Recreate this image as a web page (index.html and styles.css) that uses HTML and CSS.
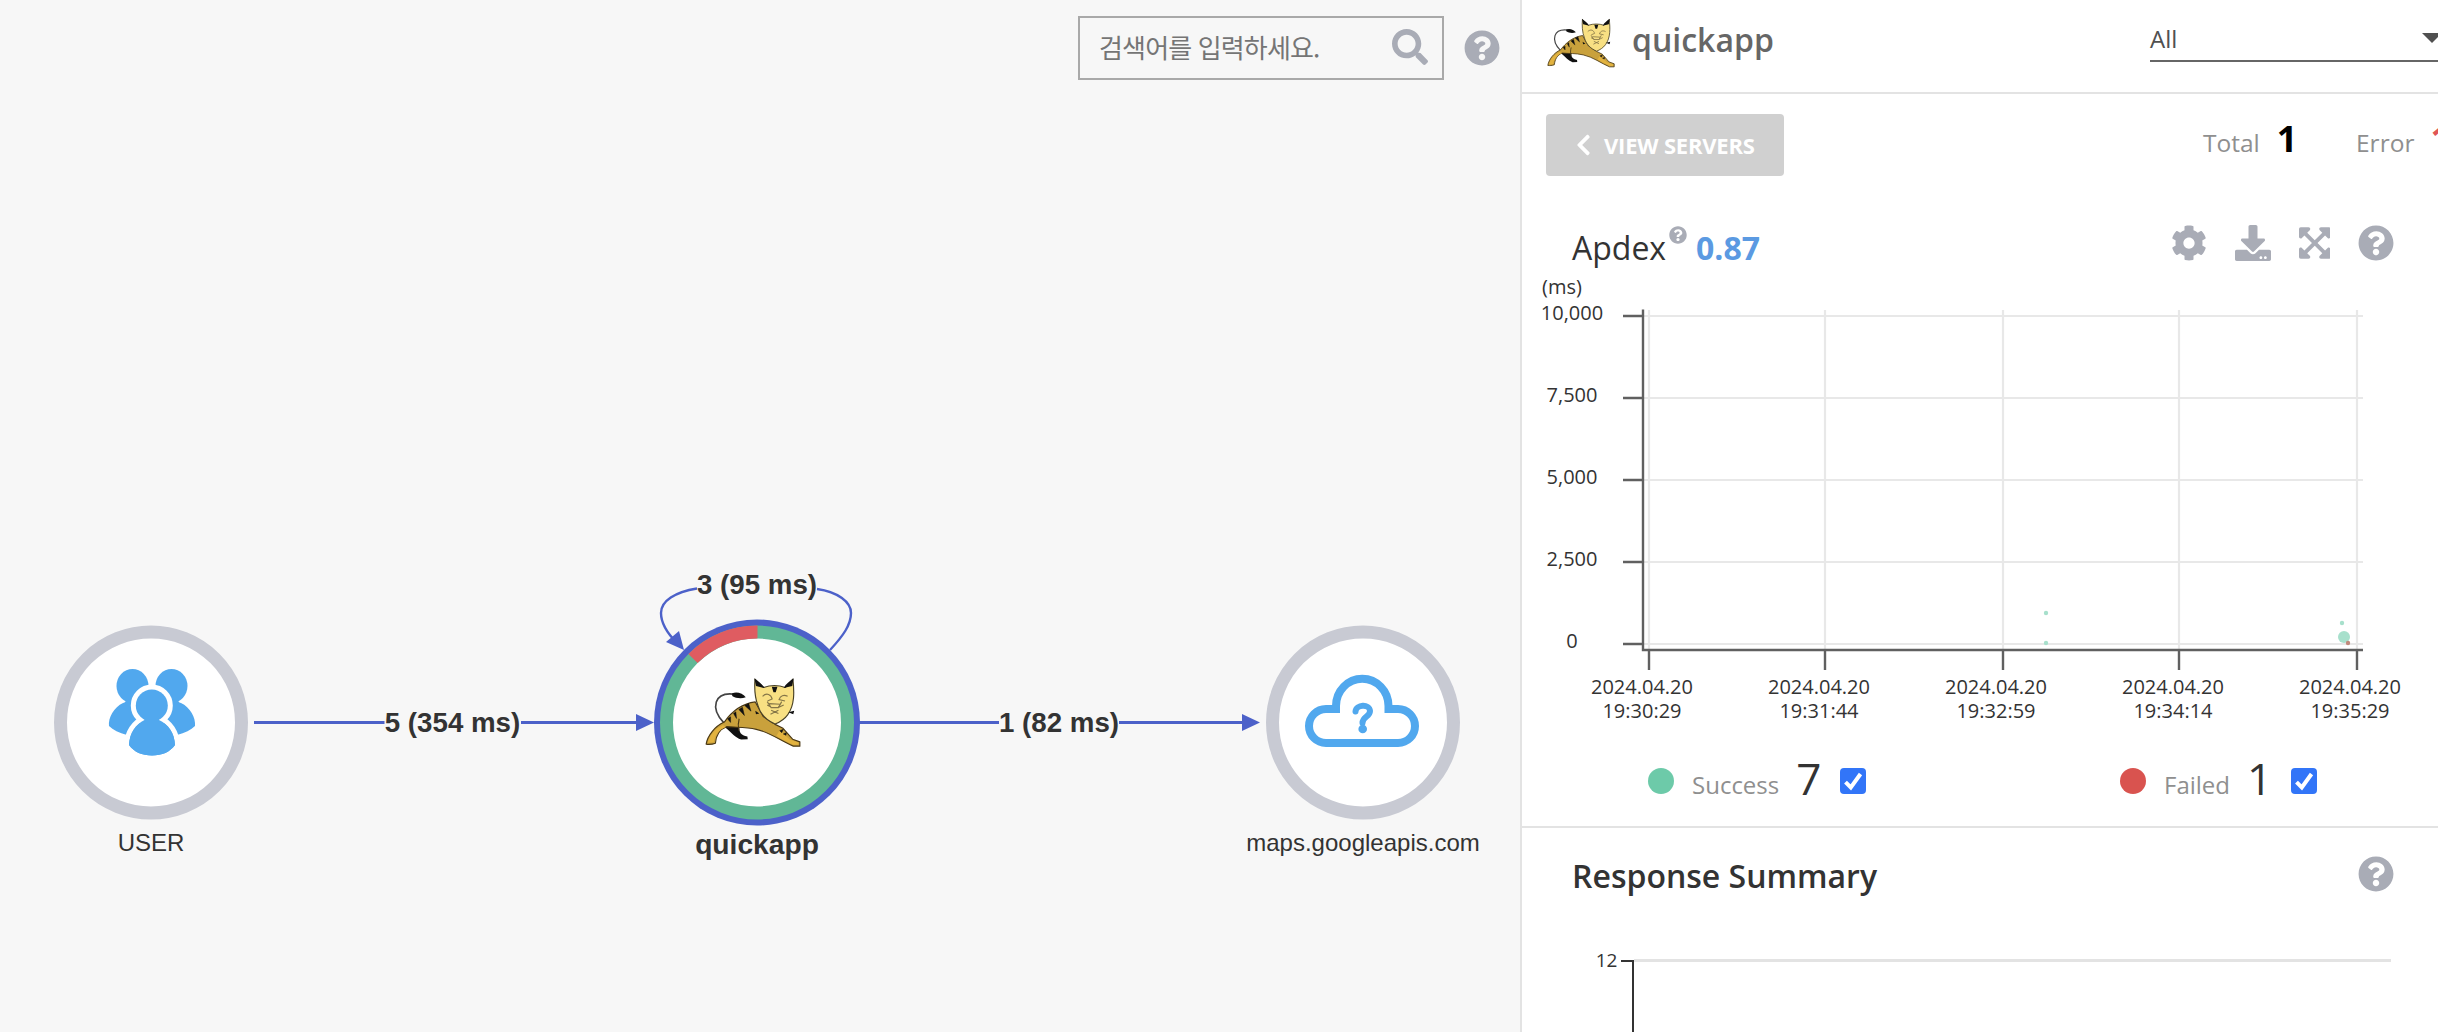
FILE: index.html
```html
<!DOCTYPE html>
<html lang="ko">
<head>
<meta charset="utf-8">
<title>quickapp</title>
<link rel="stylesheet" href="styles.css">
</head>
<body>
<svg class="defs" aria-hidden="true">
  <symbol id="i-help" viewBox="0 0 512 512"><path d="M504 256c0 136.997-111.043 248-248 248S8 392.997 8 256C8 119.083 119.043 8 256 8s248 111.083 248 248zM262.655 90c-54.497 0-89.255 22.957-116.549 63.758-3.536 5.286-2.353 12.415 2.715 16.258l34.699 26.31c5.205 3.947 12.621 3.008 16.665-2.122 17.864-22.658 30.113-35.797 57.303-35.797 20.429 0 45.698 13.148 45.698 32.958 0 14.976-12.363 22.667-32.534 33.976C247.128 238.528 216 254.941 216 296v4c0 6.627 5.373 12 12 12h56c6.627 0 12-5.373 12-12v-1.333c0-28.462 83.186-29.647 83.186-106.667 0-58.002-60.165-102-116.531-102zM256 338c-25.365 0-46 20.635-46 46 0 25.364 20.635 46 46 46s46-20.636 46-46c0-25.365-20.635-46-46-46z"/></symbol>
  <symbol id="i-search" viewBox="0 0 512 512"><path d="M505 442.7L405.3 343c-4.5-4.5-10.6-7-17-7H372c27.6-35.3 44-79.7 44-128C416 93.1 322.9 0 208 0S0 93.1 0 208s93.1 208 208 208c48.3 0 92.7-16.4 128-44v16.3c0 6.4 2.5 12.5 7 17l99.7 99.7c9.4 9.4 24.6 9.4 33.9 0l28.3-28.3c9.4-9.4 9.4-24.6.1-34zM208 336c-70.7 0-128-57.2-128-128 0-70.7 57.2-128 128-128 70.7 0 128 57.2 128 128 0 70.7-57.2 128-128 128z"/></symbol>
  <symbol id="i-cog" viewBox="0 0 512 512"><path d="M487.4 315.7l-42.6-24.6c4.3-23.2 4.3-47 0-70.2l42.6-24.6c4.9-2.8 7.1-8.6 5.5-14-11.1-35.6-30-67.8-54.7-94.6-3.8-4.1-10-5.1-14.8-2.3L380.8 110c-17.9-15.4-38.5-27.3-60.8-35.1V25.8c0-5.6-3.9-10.5-9.4-11.7-36.7-8.2-74.3-7.8-109.2 0-5.500 1.2-9.4 6.1-9.4 11.7V75c-22.2 7.9-42.8 19.8-60.8 35.1L88.7 85.5c-4.9-2.8-11-1.9-14.8 2.3-24.7 26.7-43.6 58.9-54.7 94.6-1.7 5.4.6 11.2 5.5 14L67.3 221c-4.3 23.2-4.3 47 0 70.2l-42.6 24.6c-4.9 2.8-7.1 8.6-5.5 14 11.1 35.6 30 67.8 54.7 94.6 3.8 4.1 10 5.1 14.8 2.3l42.6-24.6c17.9 15.4 38.5 27.3 60.8 35.1v49.2c0 5.6 3.9 10.5 9.4 11.7 36.7 8.2 74.3 7.8 109.2 0 5.5-1.2 9.4-6.1 9.4-11.7v-49.2c22.2-7.9 42.8-19.8 60.8-35.1l42.6 24.6c4.9 2.8 11 1.9 14.8-2.3 24.7-26.7 43.6-58.9 54.7-94.6 1.5-5.5-.7-11.3-5.6-14.1zM256 336c-44.1 0-80-35.9-80-80s35.9-80 80-80 80 35.9 80 80-35.9 80-80 80z"/></symbol>
  <symbol id="i-download" viewBox="0 0 512 512"><path d="M216 0h80c13.3 0 24 10.7 24 24v168h87.7c17.8 0 26.7 21.5 14.1 34.1L269.7 378.3c-7.5 7.5-19.8 7.5-27.3 0L90.1 226.1c-12.6-12.6-3.7-34.1 14.1-34.1H192V24c0-13.3 10.7-24 24-24zm296 376v112c0 13.3-10.7 24-24 24H24c-13.3 0-24-10.7-24-24V376c0-13.3 10.7-24 24-24h146.7l49 49c20.1 20.1 52.5 20.1 72.6 0l49-49H488c13.3 0 24 10.7 24 24zm-124 88c0-11-9-20-20-20s-20 9-20 20 9 20 20 20 20-9 20-20zm64 0c0-11-9-20-20-20s-20 9-20 20 9 20 20 20 20-9 20-20z"/></symbol>
  <symbol id="i-expand" viewBox="0 0 448 512"><path d="M448 344v112a23.94 23.94 0 0 1-24 24H312c-21.39 0-32.09-25.9-17-41l36.2-36.2L224 295.6 116.77 402.9 153 439c15.09 15.1 4.39 41-17 41H24a23.94 23.94 0 0 1-24-24V344c0-21.4 25.89-32.1 41-17l36.19 36.2L184.46 256 77.18 148.7 41 185c-15.1 15.1-41 4.4-41-17V56a23.94 23.94 0 0 1 24-24h112c21.39 0 32.09 25.9 17 41l-36.2 36.2L224 216.4l107.23-107.3L295 73c-15.09-15.1-4.39-41 17-41h112a23.94 23.94 0 0 1 24 24v112c0 21.4-25.89 32.1-41 17l-36.19-36.2L263.54 256l107.28 107.3L407 327.1c15.1-15.2 41-4.5 41 16.9z"/></symbol>
  <symbol id="i-left" viewBox="0 0 320 512"><path d="M34.52 239.03L228.87 44.69c9.37-9.37 24.57-9.37 33.94 0l22.67 22.67c9.36 9.36 9.37 24.52.04 33.9L131.49 256l154.02 154.75c9.34 9.38 9.32 24.54-.04 33.9l-22.67 22.67c-9.37 9.37-24.57 9.37-33.94 0L34.52 272.97c-9.37-9.37-9.37-24.57 0-33.94z"/></symbol>
  <symbol id="i-tomcat" viewBox="252 350 294 214">
    <path d="M312 490C268 445 280 392 346 402" fill="none" stroke="#444" stroke-width="5"/>
    <path d="M336 399c14-6 32 0 41 12-14 5-30 3-41-4z" fill="#111"/>
    <path d="M316 496l42 4c-2 16 4 26 24 30l1 8-20 1c-18-6-30-22-47-36z" fill="#111"/>
    <path d="M257 553c4-26 26-54 55-67 22-31 56-56 94-61l24 44 36 24 24 12 29 33 22 8v13h-20c-36-15-70-42-112-51-34-8-62-5-90-8-22 8-32 28-34 50-10 4-20 4-28 3z" fill="#c9a13c" stroke="#4a3814" stroke-width="3.500" stroke-linejoin="round"/>
    <path d="M262 549c5-23 24-44 46-54l8 6c-20 8-32 26-36 46zM480 511l30 28 26 9v7h-14c-20-9-38-18-52-27z" fill="#e3b33f"/>
    <path d="M374 436l19 17-7-23zM356 448l17 18-6-25zM340 460l9 15-2-20zM322 476l9 11v-17zM480 512l6 6 5-10zM491 522l8 4 1-8z" fill="#111" stroke="#111" stroke-width="1.500"/>
    <path d="M357 476c-4 14-3 26-1 36" fill="none" stroke="#4a3814" stroke-width="3.500"/>
    <path d="M405 356l26 25c20-7 46-7 66 0l23-25c4 38 6 78-16 108-10 14-24 22-38 28-24-10-44-28-52-56-10-26-11-54-9-80z" fill="#f8e083" stroke="#4a4225" stroke-width="3.500" stroke-linejoin="round"/>
    <path d="M403 353l5 24 26 6c-7-13-19-20-31-30zM522 353l-4 24-26 6c7-14 18-20 30-30zM456 379h17l-5 17h-7zM406 452l12 8-10 2zM524 452l-18 4 15 6z" fill="#111"/>
    <path d="M428 408c12-12 26-6 29 8l-14 6M504 408c-12-6-22-2-26 10l18 4M442 424l12 18h22l10-18M456 442l-14-8M476 442l16-8M448 430l34 2M454 450l22 10M476 450l-24 12" fill="none" stroke="#857648" stroke-width="3.500"/>
  </symbol>
</svg>

<main class="app">
  <section class="map">
    <div class="map-tools">
      <div class="search">
        <span class="placeholder">검색어를 입력하세요.</span>
        <svg class="icon"><use href="#i-search"/></svg>
      </div>
      <svg class="icon"><use href="#i-help"/></svg>
    </div>
    <svg class="topology" viewBox="0 0 1520 1032">
      <g class="edges">
        <path class="edge" d="M254 722.5H384.500M521 722.500H637M859 722.500H999M1119 722.500H1243"/>
        <path class="loop" d="M697 588.500C675 592 661 601 661 613C661 623 668 634 677 643M817 589C838 592 851 602 851 613C851 625 843 636 830 650"/>
        <path class="arrow" d="M636 714l18 8.500-18 8.500zM1242 714l18 8.500-18 8.500zM684 650l-18-8 13-11z"/>
      </g>
      <g class="edge-label">
        <text x="452.500" y="731.500">5 (354 ms)</text>
        <text x="1059" y="731.500">1 (82 ms)</text>
        <text x="757" y="593.500">3 (95 ms)</text>
      </g>
      <g class="node">
        <circle class="ring" cx="151" cy="722.500" r="90.500"/>
        <g class="glyph">
          <ellipse cx="132.500" cy="686" rx="16" ry="17"/>
          <ellipse cx="171.500" cy="686" rx="16" ry="17"/>
          <path d="M126 700c0 2-2 3-3 3-9 4-15 15-14 23 4 4 10 7 18 9l22-12v-26zM178 700c0 2 2 3 3 3 9 4 15 15 14 23-4 4-10 7-18 9l-22-12v-26z"/>
          <path class="front gap" d="M145 720h14c9 4 15.500 13 16 25-5 7-13 10.500-23 10.500S134 752 129 745c.5-12 7-21 16-25z"/>
          <circle class="front gap" cx="151.800" cy="705.500" r="16"/>
          <path d="M144.500 717h14.500v3c9 4 15.500 13 16 25-5 7-13 10.500-23 10.500S134 752 129 745c.5-12 7-21 15.500-25z"/>
        </g>
        <text x="151" y="850.500">USER</text>
      </g>
      <g class="node">
        <circle class="halo" cx="757" cy="722.500" r="103"/>
        <circle class="ok" cx="757" cy="722.500" r="90.500"/>
        <path class="bad" d="M757.500 632A90.500 90.500 0 0 0 693 658.500"/>
        <use href="#i-tomcat" x="704.500" y="677" width="97" height="71"/>
        <text class="main" x="757" y="854">quickapp</text>
      </g>
      <g class="node">
        <circle class="ring" cx="1363" cy="722.500" r="90.500"/>
        <path class="cloud" d="M1326 743a17 17 0 0 1 0-34h10v-3a26 27 0 0 1 52.500 0v3h9.500a17 17 0 0 1 0 34z"/>
        <path class="mark" d="M1355.500 711.500c.5-7 14-8 14.500-.5 0 6-7.500 5.500-7.500 12"/>
        <circle class="glyph" cx="1362.700" cy="729" r="4.300"/>
        <text x="1363" y="850.500">maps.googleapis.com</text>
      </g>
    </svg>
  </section>

  <aside class="panel">
    <header class="panel-head">
      <svg class="logo"><use href="#i-tomcat"/></svg>
      <h1>quickapp</h1>
      <div class="select"><span>All</span><i class="caret"></i></div>
    </header>
    <section class="scatter-section">
      <div class="servers">
        <div class="view-btn"><svg class="chev"><use href="#i-left"/></svg>VIEW SERVERS</div>
        <div class="count total"><span>Total</span><b>1</b></div>
        <div class="count error"><span>Error</span><b>1</b></div>
      </div>
      <div class="apdex">
        <span class="title">Apdex</span>
        <svg class="sup"><use href="#i-help"/></svg>
        <b>0.87</b>
        <div class="actions">
          <svg class="icon"><use href="#i-cog"/></svg>
          <svg class="icon"><use href="#i-download"/></svg>
          <svg class="icon narrow"><use href="#i-expand"/></svg>
          <svg class="icon"><use href="#i-help"/></svg>
        </div>
      </div>
      <svg class="scatter" viewBox="1522 270 916 460">
        <path class="grid" d="M1644 316H2363M1644 398H2363M1644 480H2363M1644 562H2363M1644 644H2363M1649 310V650M1825 310V650M2003 310V650M2179 310V650M2357 310V650"/>
        <path class="axis" d="M1643 309.500V650H2363M1623 316H1643M1623 398H1643M1623 480H1643M1623 562H1643M1623 644H1643M1649 650V670M1825 650V670M2003 650V670M2179 650V670M2357 650V670"/>
        <g class="dots">
          <circle cx="2046" cy="613" r="2.200"/><circle cx="2046" cy="643" r="2.200"/>
          <circle cx="2342" cy="623" r="2.200"/><circle cx="2344" cy="637" r="6"/>
          <circle class="fail" cx="2348" cy="643" r="2.200"/>
        </g>
        <g class="labels">
          <text x="1562" y="294">(ms)</text>
          <text x="1572" y="320">10,000</text>
          <text x="1572" y="402">7,500</text>
          <text x="1572" y="484">5,000</text>
          <text x="1572" y="566">2,500</text>
          <text x="1572" y="648">0</text>
          <text x="1642" y="694">2024.04.20</text><text x="1642" y="718">19:30:29</text>
          <text x="1819" y="694">2024.04.20</text><text x="1819" y="718">19:31:44</text>
          <text x="1996" y="694">2024.04.20</text><text x="1996" y="718">19:32:59</text>
          <text x="2173" y="694">2024.04.20</text><text x="2173" y="718">19:34:14</text>
          <text x="2350" y="694">2024.04.20</text><text x="2350" y="718">19:35:29</text>
        </g>
      </svg>
      <div class="legend">
        <div class="item success"><i class="dot"></i><span>Success</span><em>7</em><svg class="check" viewBox="0 0 26 26"><path d="M5.500 14.200l5.300 5.300L20.500 6"/></svg></div>
        <div class="item failed"><i class="dot"></i><span>Failed</span><em>1</em><svg class="check" viewBox="0 0 26 26"><path d="M5.500 14.200l5.300 5.300L20.500 6"/></svg></div>
      </div>
    </section>
    <section class="summary">
      <div class="summary-head"><h2>Response Summary</h2><svg class="icon"><use href="#i-help"/></svg></div>
      <svg class="bars" viewBox="1522 932 916 100">
        <path class="bar-grid" d="M1634 960.500H2391"/>
        <path class="bar-axis" d="M1621 961H1633V1032"/>
        <text x="1606.500" y="966.500">12</text>
      </svg>
    </section>
  </aside>
</main>
</body>
</html>
```

FILE: styles.css
```css
* { box-sizing: border-box; }
body { margin: 0; overflow: hidden; font-family: "Open Sans", "Noto Sans CJK KR", sans-serif; color: #333; }
h1, h2 { margin: 0; }
svg { display: block; flex: none; }
.defs { display: none; }
.app { display: flex; width: 2438px; height: 1032px; background: #fff; overflow: hidden; }
.icon { width: 36px; height: 36px; fill: #a9acb6; }
.icon.narrow { width: 31.5px; }

/* Server map */
.map { display: grid; width: 1520px; height: 1032px; background: #f7f7f7; }
.map > * { grid-area: 1 / 1; }
.topology { width: 1520px; height: 1032px; font-family: "Liberation Sans", Arial, sans-serif; }
.topology text { text-anchor: middle; fill: #333; font-size: 24px; }
.map-tools { display: flex; justify-content: flex-end; align-items: center; gap: 20px; height: 64px; margin: 16px 20px 0 0; align-self: start; }
.search { display: flex; align-items: center; justify-content: space-between; width: 366px; height: 64px; padding: 0 14px 2px 19px; border: 2px solid #a9a9a9; }
.placeholder { font: 26px/36px "Noto Sans CJK KR", sans-serif; letter-spacing: -.85px; color: #757575; white-space: nowrap; }
.edge { stroke: #4c61c9; stroke-width: 3; }
.loop { fill: none; stroke: #4c61c9; stroke-width: 2.4; }
.arrow { fill: #4c61c9; }
.topology .edge-label text { font-size: 27.7px; font-weight: 700; }
.topology .main { font-size: 28.2px; font-weight: 700; }
.ring, .ok { fill: #fff; stroke: #c8cad3; stroke-width: 13; }
.ok { stroke: #61b796; }
.bad { fill: none; stroke: #df5c61; stroke-width: 13; }
.halo { fill: #4c61c9; }
.glyph { fill: #51a8ee; }
.gap { stroke: #fff; stroke-width: 10; paint-order: stroke; }
.cloud { fill: none; stroke: #51a8ee; stroke-width: 8; }
.mark { fill: none; stroke: #51a8ee; stroke-width: 6; stroke-linecap: round; }

/* Side panel */
.panel { width: 918px; flex: none; border-left: 2px solid #e3e3e3; overflow: hidden; }
.panel-head { display: flex; align-items: flex-start; height: 94px; padding-left: 24px; border-bottom: 2px solid #e3e3e3; }
.logo { width: 70px; height: 50px; margin-top: 18px; }
.panel-head h1 { flex: none; width: 518px; margin: 18px 0 0 16px; font-size: 32px; line-height: 44px; font-weight: 600; color: #666; }
.select { display: flex; flex: none; align-items: flex-start; width: 300px; height: 38px; margin-top: 24px; border-bottom: 2px solid #666; font-size: 24px; line-height: 30px; color: #505050; }
.select span { width: 272px; }
.caret { border: 10.5px solid transparent; border-top-color: #505050; border-bottom: 0; margin-top: 9px; }

.scatter-section { height: 734px; border-bottom: 2px solid #e3e3e3; }
.servers { display: flex; height: 82px; padding: 20px 0 0 24px; white-space: nowrap; }
.view-btn { display: flex; flex: none; align-items: center; width: 238px; height: 62px; padding-left: 30px; gap: 13px; border-radius: 4px; background: #d0d0d0; color: #fff; font-size: 22px; font-weight: 700; letter-spacing: -.2px; }
.chev { width: 15px; height: 24px; fill: #fff; }
.count { display: flex; flex: none; align-items: baseline; height: 50px; line-height: 50px; font-size: 24.5px; color: #8f8f8f; }
.count b { font-size: 36px; }
.total { width: 153px; margin-left: 419px; }
.total b { margin-left: 17px; color: #000; }
.error b { margin-left: 16px; color: #e05656; }
.apdex { display: flex; height: 94px; padding: 49px 44px 0 50px; font-size: 32px; line-height: 40px; }
.apdex .title { width: 97px; margin-top: 3px; }
.apdex b { margin: 3px 0 0 9px; color: #5b9ae2; }
.sup { width: 18px; height: 18px; margin-top: 1px; fill: #a9acb6; }
.actions { display: flex; gap: 28px; margin-left: auto; }
.scatter { width: 916px; height: 460px; }
.grid { stroke: #000; stroke-opacity: .09; stroke-width: 2.2; }
.axis { fill: none; stroke: #606060; stroke-width: 2.4; }
.dots { fill: #a7e0cc; }
.dots .fail { fill: #c08a7c; }
.labels text { font-size: 20px; text-anchor: middle; fill: #333; }
.bars text { font-size: 19px; text-anchor: middle; fill: #333; }
.legend { display: flex; height: 96px; padding: 24px 0 0 126px; }
.item { display: flex; flex: none; align-items: center; height: 54px; width: 472px; }
.item .dot { width: 26px; height: 26px; border-radius: 50%; background: #6dcaa9; }
.item span { margin: 8px 0 0 18px; font-size: 24px; line-height: 34px; color: #8f8f8f; }
.item em { margin: -7px 0 0 17px; font-size: 44px; font-style: normal; line-height: 54px; }
.check { width: 26px; height: 26px; margin-left: 19px; border-radius: 4px; background: #3275f8; }
.check path { fill: none; stroke: #fff; stroke-width: 4; }
.failed .dot { background: #d9534f; }

.summary-head { display: flex; justify-content: space-between; height: 104px; padding: 28px 44px 0 50px; }
.summary-head h2 { font-size: 32px; line-height: 40px; font-weight: 600; }
.bars { width: 916px; height: 100px; }
.bar-grid { stroke: #e3e3e3; stroke-width: 3; }
.bar-axis { fill: none; stroke: #333; stroke-width: 2; }
```
